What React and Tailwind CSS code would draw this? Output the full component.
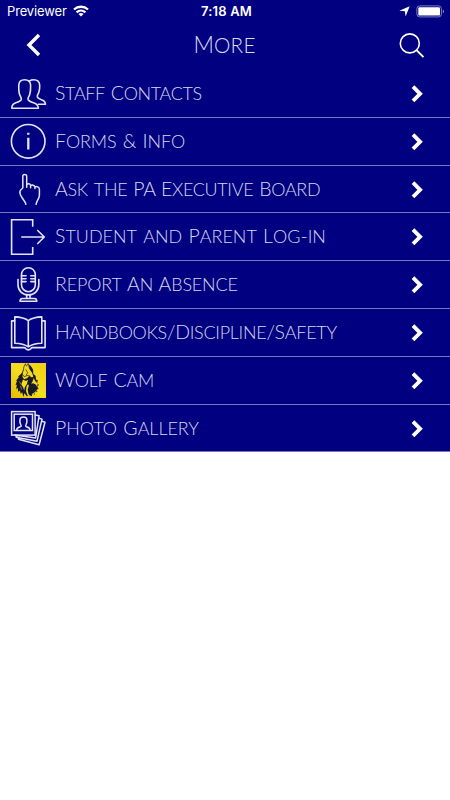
import React from "react";

const ICON = "block size-9 shrink-0 overflow-visible";

function LineIcon({ children, width = 1.4 }) {
  return (
    <svg
      viewBox="0 0 36 36"
      className={ICON}
      fill="none"
      stroke="#e4e4f4"
      strokeWidth={width}
      strokeLinecap="round"
      strokeLinejoin="round"
    >
      {children}
    </svg>
  );
}

const PeopleIcon = () => (
  <LineIcon width={1.6}>
    <path d="M1.8 33.2c0-3.2 1-4.6 4-5.5 3.2-1 5-1.7 5.5-3.5.2-1.4-1-2.500-1.700-4.700C8.700 16.800 8.700 13 8.800 10c.2-3.700 2.500-5.300 5.800-5.300s5.800 1.600 6 5.300c.1 3 0 6.800-.9 9.500-.7 2.200-1.900 3.300-1.700 4.700.5 1.800 2.300 2.500 5.500 3.500 3.300 1.100 4.800 2.300 4.900 5.500z" />
    <path d="M19.600 5.900c1.100-.8 2.500-1.100 4.200-1.100 3.600 0 5.700 2 5.900 5.400.1 2.600-.1 5-.9 7.200-.8 1.900-1.700 2.800-1.500 4.300.3 1.600 1.800 2.200 4.100 3 2.900.9 4 2 4.100 4.600h-7.400" />
  </LineIcon>
);

const InfoIcon = () => (
  <LineIcon width={1.6}>
    <circle cx="18.200" cy="18.300" r="16.800" />
    <path d="M18.300 9.800v2M18.300 14.800v11.700" strokeWidth="2.300" strokeLinecap="butt" />
  </LineIcon>
);

const HandIcon = () => (
  <LineIcon width={1.5}>
    <path d="M15.900 33.300c-.5-2.600-2.500-4.300-4.200-7.100-1.600-2.700-2.300-4.100-1.700-6 .4-1.300 1.300-2.200 2.800-3.200V5.300c0-2.500 3.900-2.500 3.900 0v11" />
    <path d="M16.700 13.400c1-1.100 3.600-.9 3.900.9v2.400M20.700 14.600c1.300-.9 3.900-.5 4.200 1.400v1.600M25 16c1.500-.9 4.200-.2 4.400 2v6.300c-.1 3.700-2.800 5.200-3.300 9" />
  </LineIcon>
);

const LoginIcon = () => (
  <LineIcon width={1.6}>
    <path d="M22.700 8.700V1.700H1.600v34.500h21.100v-7.300" strokeLinejoin="miter" strokeLinecap="butt" />
    <path d="M11.800 19h22.500M27.700 12.500l6.600 6.500-6.600 6.500" />
  </LineIcon>
);

const MicIcon = () => (
  <LineIcon width={1.6}>
    <rect x="11.500" y="1.700" width="13.800" height="24" rx="6.900" />
    <path d="M8 13.500v5.200c0 6 4.600 10.200 10.400 10.200s10.400-4.200 10.400-10.200v-5.200" />
    <path d="M11.500 9.800h4.500M11.500 12.700h4.500M11.500 15.600h4.500M20.800 9.800h4.500M20.800 12.700h4.500M20.800 15.600h4.500" />
    <path d="M16.700 29v3.200M20 29v3.200" />
    <path d="M10 35.200c.2-2 .8-2.700 2.300-2.700h12.200c1.500 0 2.200.8 2.300 2.700z" />
  </LineIcon>
);

const BookIcon = () => (
  <LineIcon width={1.6}>
    <path d="M18.300 6.600C14.500 3.900 10 3.100 4.800 2.900v26.400c5.200.2 9.700 1 13.500 3.600 3.800-2.600 8.300-3.400 13.500-3.600V2.900c-5.200.2-9.700 1-13.500 3.700zM18.300 6.600v26.300" />
    <path d="M4.700 6.900H1.600v26.700h12.700c.8 0 1 .4 1.500 1.100 1.200 1.500 3.800 1.500 5 0 .5-.7.700-1.100 1.500-1.100h12.800V6.900H32" />
  </LineIcon>
);

const WolfIcon = () => (
  <svg viewBox="0 0 36 36" className={ICON}>
    <defs>
      <linearGradient id="wolf-bg" x1="0" y1="1" x2="1" y2="0">
        <stop offset="0" stopColor="#e6bd00" />
        <stop offset="0.500" stopColor="#f5de20" />
        <stop offset="1" stopColor="#f0d010" />
      </linearGradient>
    </defs>
    <rect x="1" y="1" width="35" height="35" fill="url(#wolf-bg)" />
    {/* mane */}
    <path
      fill="#17182a"
      d="M12.500 10.500l-4.300 4 .6.800-2.600 3.200.8.600-1.500 4 1.300-.4-.6 4.300 1.600-1 .3 3.700 1.800-1.200.8 3.200 1.500-1.400 1.200 4.700 1-3.700 2.700 3.200 1-1.800 3.700 1.500.6-2.200 2.700.5-.2-2 2.600-.8-1-1.700 2.200-1.500-1.300-1.200 1.500-2.900-1.600-.5.600-4-1.900-.2-.4-3.900-2.300-1.800-.2-4.300-1.600-2.700-2-2.500-1.300 3.500-2.700 3-2.500-1z"
    />
    {/* muzzle and face */}
    <path
      fill="#f3da1c"
      d="M14 4.500l1.500-2.700 1.700 1.700 1.500-1.300.8 4.300 2.200 3.500 1.700 4.500-1.400 1-2.500-1.500-2.600 2.200-2.800 1-1.700-2.400.6-5.300z"
    />
    <path
      fill="#f3da1c"
      d="M13 17.500l2.800 1.500 2.200-1.300-1 4-2.300 3.800-.5 3-1.200-3.500-1.800-2.500zM16.500 24.500l1.400-2.300 1 1.300-1.200 4 .7 4.200 1.400 2-2.500-1-1.300-3.700zM23.800 16l1.300 3 2.500 2.500-.3 4-1.300-2.700-2.800-1.600-2 .6 1.300-2.300zM26.800 28l-1 2.700-3.300 2-1-.5 3.300-2z"
    />
    <path
      d="M14 4.500l-.8 4.500-2 4M14 4.500l1.500-2.700 1 2.600M17.200 3.500l1-2 1.200 4.700 2.300 3.700M15.700 7.500l2 3.200-1.500 2.500M12.500 12.500l1.700 2.200 3-1.200 2.800.5M9.500 17l2 2M9 21.500l2.500 1.500M10.500 26.500l2.500-.5"
      fill="none"
      stroke="#17182a"
      strokeWidth="0.700"
    />
    <path d="M9.500 19.500l1.500 3M10.500 24l1.200 3.500M27 18.500l.6 2" stroke="#d5bd18" strokeWidth="0.600" />
  </svg>
);

const GalleryIcon = () => (
  <LineIcon width={1.5}>
    <rect x="1.600" y="1.600" width="23.500" height="23.500" strokeLinejoin="miter" />
    <rect x="4.200" y="4.200" width="18.300" height="16.300" strokeLinejoin="miter" />
    <path d="M6.700 19.700c.3-2 1.300-2.500 3.700-3 1-.4 1-1.100.3-2.100-.8-1.400-.9-3-.8-4.600.2-3.900 6.900-3.900 7 0 .1 1.600 0 3.200-.8 4.600-.7 1-.7 1.700.3 2.100 2.300.5 3.300 1 3.600 3" />
    <path d="M25.300 5.100l3.800.6-3.500 22.200-20.700-2.800M29 8.300l3 .8-5 22.100L6.300 27.300l-.4-1.900M32 11.300l3 1-5.900 22.500-20.600-5.500-.3-1.500" />
  </LineIcon>
);

const ROWS = [
  { label: "Staff Contacts", icon: PeopleIcon, height: "h-12", tracking: "tracking-[-0.340px]" },
  { label: "Forms & Info", icon: InfoIcon, height: "h-12", tracking: "tracking-[-0.080px]" },
  { label: "Ask the PA Executive Board", icon: HandIcon, height: "h-[47px]", tracking: "tracking-[-0.310px]" },
  { label: "Student and Parent Log-in", icon: LoginIcon, height: "h-12", tracking: "tracking-[0.010px]" },
  { label: "Report An Absence", icon: MicIcon, height: "h-12", tracking: "tracking-[-0.160px]" },
  { label: "Handbooks/Discipline/Safety", icon: BookIcon, height: "h-12", tracking: "tracking-[-0.270px]" },
  { label: "Wolf Cam", icon: WolfIcon, height: "h-12", tracking: "tracking-[-0.200px]" },
  { label: "Photo Gallery", icon: GalleryIcon, height: "h-[47px]", tracking: "tracking-[-0.020px]" },
];

// capitals keep the full size, lowercase runs become slightly smaller capitals
function SmallCaps({ text }) {
  return text.split(/([a-z]+)/).map((part, i) =>
    /^[a-z]/.test(part) ? (
      <span key={i} className="text-[0.920em] uppercase">{part}</span>
    ) : (
      part
    )
  );
}

function StatusBar() {
  return (
    <div className="grid h-[22px] grid-cols-3 items-center pl-[7px] pr-[5px] font-['Inter',sans-serif] text-[13px] leading-none text-white">
      <div className="flex items-center gap-[6px]">
        <span className="tracking-[-0.150px]">Previewer</span>
        <svg viewBox="0 0 16 12" className="h-3 w-4" fill="none" stroke="#fff" strokeWidth="2.300">
          <path d="M1 4.500c4-3.700 10-3.700 14 0M3.600 7.300c2.600-2.300 6.200-2.300 8.800 0" />
          <path d="M8 11.500L5.500 9c1.500-1.200 3.500-1.200 5 0z" fill="#fff" stroke="none" />
        </svg>
      </div>
      <span className="pl-[1px] text-center font-semibold tracking-[0.200px]">7:18 AM</span>
      <div className="flex items-center justify-end gap-[6px]">
        <svg viewBox="0 0 11 11" className="size-[11px]" fill="#fff">
          <path d="M10.700.3L6.600 10.600 5.900 5.300.3 4.800z" />
        </svg>
        <svg viewBox="0 0 29 13" className="h-[13px] w-[29px]">
          <rect x="0.900" y="0.900" width="24.500" height="11" rx="2.800" fill="none" stroke="#8080c0" />
          <rect x="2.300" y="2.300" width="21.700" height="8.300" rx="1.200" fill="#fff" />
          <path d="M26.800 4.600c1.700.5 1.700 3.300 0 3.800z" fill="#8080c0" />
        </svg>
      </div>
    </div>
  );
}

function NavBar() {
  return (
    <header className="grid h-12 grid-cols-3 items-center pl-[26px] pr-[25px] text-white">
      <svg viewBox="0 0 16 24" className="mb-[2px] h-6 w-4" fill="none" stroke="#fff" strokeWidth="3.400">
        <path d="M13 2L3 12l10 10" />
      </svg>
      <h1 className="pb-px pr-[2px] text-center text-[22.500px] font-light leading-none tracking-[0.200px] text-[#dcdcf0]">
        <SmallCaps text="More" />
      </h1>
      <svg viewBox="0 0 26 26" className="size-[26px] justify-self-end" fill="none" stroke="#fff" strokeWidth="1.600">
        <circle cx="10.800" cy="10.400" r="9.500" />
        <path d="M17.500 17.100l7 7" strokeWidth="2" />
      </svg>
    </header>
  );
}

function MenuRow({ item }) {
  const Icon = item.icon;
  return (
    <li className={`flex items-start border-b border-[#7878b8] pl-[10px] pr-[27px] pt-[5px] ${item.height}`}>
      <Icon />
      <span className={`ml-[9px] flex-1 whitespace-nowrap text-[19.500px] font-light leading-9 text-[#d8d8ee] [word-spacing:1px] ${item.tracking}`}>
        <SmallCaps text={item.label} />
      </span>
      <svg viewBox="0 0 12 18" className="mt-[10px] h-[18px] w-3" fill="none" stroke="#fff" strokeWidth="3.800">
        <path d="M2 1.700L9.100 8.800 2 15.900" />
      </svg>
    </li>
  );
}

export default function App() {
  return (
    <div className="min-h-screen w-full bg-white font-['Lato',sans-serif]">
      <div className="bg-[#000080]">
        <StatusBar />
        <NavBar />
        <ul>
          {ROWS.map((item) => (
            <MenuRow key={item.label} item={item} />
          ))}
        </ul>
      </div>
    </div>
  );
}
